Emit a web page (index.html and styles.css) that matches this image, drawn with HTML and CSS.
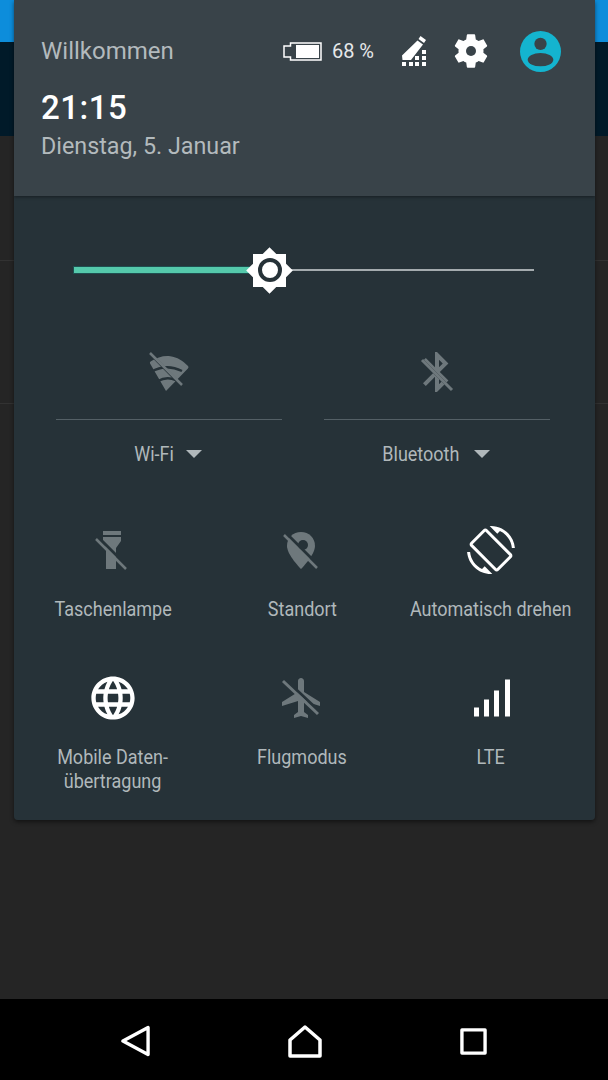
FILE: index.html
```html
<!DOCTYPE html>
<html lang="de">
<head>
  <meta charset="UTF-8">
  <title>Schnelleinstellungen</title>
  <link rel="stylesheet" href="styles.css">
</head>
<body>
  <div class="screen">
    <div class="app">
      <div class="app-status"></div>
      <div class="app-toolbar"></div>
      <div class="app-row first"></div>
      <div class="app-row second"></div>
      <div class="app-rest"></div>
    </div>

    <div class="panel">
      <header class="kopf">
        <div class="kopf-zeile">
          <span class="willkommen">Willkommen</span>
          <div class="kopf-icons">
            <svg class="batterie" viewBox="0 0 39 19">
              <path class="batterie-rand" d="M7.5 1H38v17H7.5V15H1V4h6.5z"/>
              <rect class="batterie-voll" x="13" y="3" width="23" height="13"/>
            </svg>
            <span class="prozent">68 %</span>
            <svg class="stift" viewBox="0 0 27 32">
              <path d="M20.5 1l5.5 4-2 3-5.500-4zM17.500 5.500l5.500 4L11 25H2.500L2 20.500z"/>
              <path d="M2 27h4v4H2zM9 27h4v4H9zM15 27h4v4h-4zM22 27h4v4h-4zM15 21h4v4h-4zM22 21h4v4h-4zM22 15h4v4h-4z"/>
            </svg>
            <svg class="zahnrad" viewBox="0 0 24 24">
              <path d="M19.430 12.980c.04-.32.07-.64.07-.98s-.03-.66-.07-.98l2.110-1.650c.19-.15.24-.42.12-.64l-2-3.460c-.12-.22-.39-.3-.61-.22l-2.490 1c-.52-.4-1.080-.73-1.690-.98l-.38-2.650C14.460 2.180 14.250 2 14 2h-4c-.25 0-.46.18-.49.42l-.38 2.650c-.61.25-1.170.59-1.690.98l-2.490-1c-.23-.09-.49 0-.61.22l-2 3.460c-.13.22-.07.49.12.64l2.110 1.650c-.04.32-.07.65-.07.98s.03.66.07.98l-2.110 1.650c-.19.15-.24.42-.12.64l2 3.460c.12.22.39.3.61.22l2.490-1c.52.4 1.080.73 1.690.98l.38 2.650c.03.24.24.42.49.42h4c.25 0 .46-.18.49-.42l.38-2.650c.61-.25 1.170-.59 1.690-.98l2.490 1c.23.09.49 0 .61-.22l2-3.460c.12-.22.07-.49-.12-.64l-2.110-1.650z"/>
              <circle class="zahnrad-loch" cx="12" cy="12" r="3"/>
            </svg>
            <svg class="profil" viewBox="0 0 40 40">
              <circle class="profil-kreis" cx="20" cy="20" r="20"/>
              <circle cx="20" cy="12.500" r="6"/>
              <ellipse cx="20" cy="28" rx="12.500" ry="6.500"/>
            </svg>
          </div>
        </div>
        <div class="uhrzeit">21:15</div>
        <div class="datum">Dienstag, 5. Januar</div>
      </header>

      <div class="schnell">
        <div class="helligkeit">
          <div class="regler-aktiv"></div>
          <div class="regler-rest"></div>
          <div class="regler-knopf"><span class="knopf-ring"></span></div>
        </div>

        <div class="funk">
          <div class="funk-spalte">
            <svg class="icon aus" viewBox="1 -4 48 48">
              <path d="M22 39L3 14c-.7-1-.5-2 .5-2.700C9 7 15 4 22 4s13 3 18.500 7.300c1 .7 1.200 1.700.5 2.700z" transform="rotate(7 22 39)"/>
              <path class="strich-dunkel" d="M7 20c10-6 21-6 31-1M14 29c6-3.500 12-3.500 18-1"/>
              <path class="strich-dunkel breit" d="M7.500 3L37 33"/>
              <path class="strich" d="M6 1l32 32"/>
            </svg>
            <div class="funk-name wifi"><span class="schmal-text">Wi-Fi</span><i class="pfeil"></i></div>
          </div>
          <div class="funk-spalte">
            <svg class="icon aus" viewBox="0 0 24 24">
              <path d="M17.710 7.710L12 2h-1v7.590L6.410 5 5 6.410 10.590 12 5 17.590 6.410 19 11 14.410V22h1l5.710-5.710-4.300-4.290 4.300-4.290zM13 5.830l1.880 1.880L13 9.590V5.830zm1.880 10.460L13 18.170v-3.760l1.880 1.880z"/>
              <path class="strich-dunkel breit-klein" d="M4.500 6L19.500 21"/>
              <path class="strich schmal" d="M4.500 6L19.500 21"/>
            </svg>
            <div class="funk-name bt"><span class="schmal-text">Bluetooth</span><i class="pfeil"></i></div>
          </div>
        </div>

        <div class="kacheln">
          <div class="kachel">
            <svg class="icon aus" viewBox="-6 -4 48 48">
              <path d="M8 1h18v4H8zM8 7h18v4l-5 7v21H11V18l-3-7z"/>
              <path class="strich-dunkel breit" d="M3 7l30 30"/>
              <path class="strich" d="M1 9l30 30"/>
            </svg>
            <span class="schmal-text">Taschenlampe</span>
          </div>
          <div class="kachel">
            <svg class="icon aus" viewBox="-4 -4 48 48">
              <path d="M19 2c8 0 14 6 14 14 0 9-14 23-14 23S5 25 5 16C5 8 11 2 19 2z"/>
              <circle class="loch" cx="21" cy="15" r="5"/>
              <path class="strich-dunkel breit" d="M4 3l33 33"/>
              <path class="strich" d="M2 5l33 33"/>
            </svg>
            <span class="schmal-text">Standort</span>
          </div>
          <div class="kachel">
            <svg class="icon hell drehen" viewBox="0 0 24 24">
              <path d="M16.480 2.520c3.270 1.550 5.610 4.720 5.970 8.480h1.500C23.440 4.840 18.290 0 12 0l-.66.03 3.810 3.810 1.330-1.320zm-6.250-.77c-.59-.59-1.540-.59-2.120 0L1.750 8.110c-.59.59-.59 1.540 0 2.120l12.020 12.020c.59.59 1.540.59 2.120 0l6.360-6.360c.59-.59.59-1.540 0-2.120L10.230 1.750zm4.600 19.440L2.810 9.170l6.360-6.360 12.020 12.020-6.360 6.360zm-7.310.29C4.250 19.940 1.910 16.760 1.550 13H.05C.56 19.160 5.710 24 12 24l.66-.03-3.810-3.810-1.330 1.320z"/>
            </svg>
            <span class="schmal-text">Automatisch drehen</span>
          </div>
          <div class="kachel">
            <svg class="icon hell globus" viewBox="0.900 0.900 22.200 22.200">
              <path d="M11.990 2C6.470 2 2 6.480 2 12s4.470 10 9.990 10C17.520 22 22 17.520 22 12S17.520 2 11.990 2zm6.930 6h-2.950c-.32-1.250-.78-2.450-1.380-3.560 1.840.63 3.370 1.910 4.330 3.560zM12 4.040c.83 1.200 1.480 2.530 1.910 3.960h-3.820c.43-1.430 1.080-2.760 1.910-3.960zM4.260 14C4.100 13.360 4 12.690 4 12s.1-1.360.26-2h3.380c-.08.66-.14 1.320-.14 2 0 .68.06 1.340.14 2H4.260zm.82 2h2.950c.32 1.250.78 2.450 1.380 3.560-1.840-.63-3.370-1.900-4.330-3.560zm2.950-8H5.080c.96-1.660 2.490-2.930 4.330-3.560C8.810 5.550 8.350 6.750 8.030 8zM12 19.960c-.83-1.200-1.480-2.530-1.910-3.960h3.820c-.43 1.430-1.080 2.760-1.910 3.960zM14.340 14H9.660c-.09-.66-.16-1.320-.16-2 0-.68.07-1.350.16-2h4.680c.09.650.16 1.320.16 2 0 .68-.07 1.340-.16 2zm.25 5.560c.6-1.110 1.060-2.310 1.380-3.560h2.950c-.96 1.650-2.490 2.930-4.330 3.560zM16.360 14c.08-.66.14-1.320.14-2 0-.68-.06-1.340-.14-2h3.380c.16.64.26 1.310.26 2s-.1 1.360-.26 2h-3.380z"/>
            </svg>
            <span class="schmal-text">Mobile Daten-<br>übertragung</span>
          </div>
          <div class="kachel">
            <svg class="icon aus flug" viewBox="0 0 24 24">
              <path d="M21 16v-2l-8-5V3.500c0-.83-.67-1.500-1.500-1.500S10 2.670 10 3.500V9l-8 5v2l8-2.500V19l-2 1.500V22l3.500-1 3.500 1v-1.500L13 19v-5.500l8 2.500z"/>
              <path class="strich-dunkel breit-klein" d="M3.500 2.500L21 19"/>
              <path class="strich schmal" d="M2.500 3.500L20 20"/>
            </svg>
            <span class="schmal-text">Flugmodus</span>
          </div>
          <div class="kachel">
            <svg class="icon hell" viewBox="-6 -4.500 48 48">
              <path d="M1 29h5v9H1zM11 21h5v17h-5zM21 12h5v26h-5zM32 1h5v37h-5z"/>
            </svg>
            <span class="schmal-text">LTE</span>
          </div>
        </div>
      </div>
    </div>

    <nav class="navi">
      <svg class="navi-icon zurueck" viewBox="0 0 30 32">
        <path d="M2 16L28 2v28z"/>
      </svg>
      <svg class="navi-icon haus" viewBox="0 0 34 33">
        <path d="M2 15L17 2l15 13v16H2z"/>
      </svg>
      <svg class="navi-icon quadrat" viewBox="0 0 28 28">
        <rect x="2" y="2" width="24" height="24"/>
      </svg>
    </nav>
  </div>
</body>
</html>
```

FILE: styles.css
```css
* {
  box-sizing: border-box;
}

html, body {
  margin: 0;
  padding: 0;
  background: #000;
}

.screen {
  position: relative;
  width: 608px;
  height: 1080px;
  display: flex;
  flex-direction: column;
  overflow: hidden;
  font-family: Roboto, "Liberation Sans", sans-serif;
}

/* app behind the shade */
.app {
  flex: 1;
  display: flex;
  flex-direction: column;
  background: #252525;
}

.app-status {
  height: 42px;
  background: #0d8ddb;
}

.app-toolbar {
  height: 94px;
  background: #011a29;
}

.app-row {
  border-bottom: 1px solid #323232;
}

.app-row.first {
  height: 125px;
}

.app-row.second {
  height: 143px;
}

.app-rest {
  flex: 1;
}

/* shade */
.panel {
  position: absolute;
  top: 0;
  left: 14px;
  width: 581px;
  height: 820px;
  display: flex;
  flex-direction: column;
  border-radius: 0 0 4px 4px;
  overflow: hidden;
  box-shadow: 0 2px 4px rgba(0,0,0,0.5);
}

.kopf {
  flex: none;
  height: 196px;
  padding: 29px 34px 0 27px;
  background: #394349;
  box-shadow: 0 1px 3px rgba(0,0,0,0.4);
  position: relative;
}

.kopf-zeile {
  height: 44px;
  display: flex;
  align-items: center;
  justify-content: space-between;
}

.willkommen {
  font-size: 24px;
  color: #b3babd;
}

.kopf-icons {
  display: flex;
  align-items: center;
}

.batterie {
  width: 39px;
  height: 19px;
}

.batterie-rand {
  fill: none;
  stroke: #fff;
  stroke-width: 1.500;
}

.batterie-voll {
  fill: #fff;
}

.prozent {
  margin-left: 10px;
  font-size: 20px;
  color: #e6e8e9;
}

.stift {
  width: 27px;
  height: 32px;
  margin-left: 26px;
  fill: #fff;
}

.zahnrad {
  width: 40px;
  height: 40px;
  margin-left: 24px;
  fill: #fff;
}

.zahnrad-loch {
  fill: #394349;
}

.profil {
  width: 41px;
  height: 41px;
  margin-left: 29px;
  fill: #394349;
}

.profil-kreis {
  fill: #14b4cf;
}

.uhrzeit {
  margin-top: 16px;
  font-size: 33px;
  line-height: 38px;
  font-weight: 500;
  letter-spacing: 0.5px;
  color: #fff;
}

.datum {
  margin-top: 5px;
  font-size: 23.300px;
  line-height: 28px;
  color: #b3babd;
}

.schnell {
  flex: 1;
  min-height: 0;
  background: #263238;
}

.helligkeit {
  position: relative;
  height: 44px;
  margin: 52px 0 0 60px;
  width: 460px;
  display: flex;
  align-items: center;
}

.regler-aktiv {
  width: 176px;
  height: 6px;
  background: #55c9ab;
  box-shadow: 0 0 0 1px #1e4f50;
}

.regler-rest {
  flex: 1;
  height: 1.500px;
  background: #a4abae;
}

.regler-knopf {
  position: absolute;
  left: 179px;
  top: 5.500px;
  width: 33px;
  height: 33px;
  background: #fff;
  display: flex;
  align-items: center;
  justify-content: center;
}

.regler-knopf::before {
  content: "";
  position: absolute;
  inset: 0;
  background: #fff;
  transform: rotate(45deg);
}

.knopf-ring {
  position: relative;
  width: 24px;
  height: 24px;
  border: 4px solid #263238;
  border-radius: 50%;
  background: #fff;
}

.funk {
  margin-top: 56px;
  padding-left: 42px;
  display: flex;
  gap: 42px;
}

.funk-spalte {
  width: 226px;
  display: flex;
  flex-direction: column;
  align-items: center;
}

.funk-spalte .icon {
  margin-bottom: 23px;
}

.funk-name {
  width: 100%;
  height: 68px;
  padding-top: 1px;
  border-top: 1.500px solid #546066;
  display: flex;
  align-items: center;
  justify-content: center;
  gap: 10px;
  font-size: 20px;
  color: #b0b8bb;
}

.funk-name.wifi {
  padding-right: 4px;
}

.funk-name.bt {
  padding-right: 6px;
}

.schmal-text {
  display: block;
  transform: scaleX(0.9);
}

.pfeil {
  width: 0;
  height: 0;
  border-left: 8.500px solid transparent;
  border-right: 8.500px solid transparent;
  border-top: 8px solid #b0b8bb;
}

.kacheln {
  margin-top: 39px;
  padding-left: 4.500px;
  display: grid;
  grid-template-columns: repeat(3, 189px);
  grid-auto-rows: 148px;
}

.kachel {
  display: flex;
  flex-direction: column;
  align-items: center;
  text-align: center;
  font-size: 20px;
  line-height: 24px;
  color: #b0b8bb;
}

.kachel .schmal-text {
  white-space: nowrap;
}

.icon {
  display: block;
  width: 48px;
  height: 48px;
  margin-bottom: 23px;
}

.icon.aus {
  fill: #6e787c;
}

.icon.hell {
  fill: #fff;
}

.strich {
  fill: none;
  stroke: #6e787c;
  stroke-width: 2.500;
}

.strich.schmal {
  stroke-width: 1.500;
}

.strich-dunkel {
  fill: none;
  stroke: #263238;
  stroke-width: 2.500;
}

.strich-dunkel.breit {
  stroke-width: 3;
}

.strich-dunkel.breit-klein {
  stroke-width: 1.500;
}

.loch {
  fill: #263238;
}

.navi {
  height: 81px;
  display: flex;
  align-items: center;
  justify-content: space-between;
  padding: 3px 121px 0 121px;
  background: #000;
}

.navi-icon {
  fill: none;
  stroke: #fff;
  stroke-width: 3.500;
  stroke-linejoin: round;
}

.zurueck {
  width: 29px;
  height: 32px;
}

.haus {
  width: 34px;
  height: 33px;
}

.quadrat {
  width: 27px;
  height: 27px;
}
```
